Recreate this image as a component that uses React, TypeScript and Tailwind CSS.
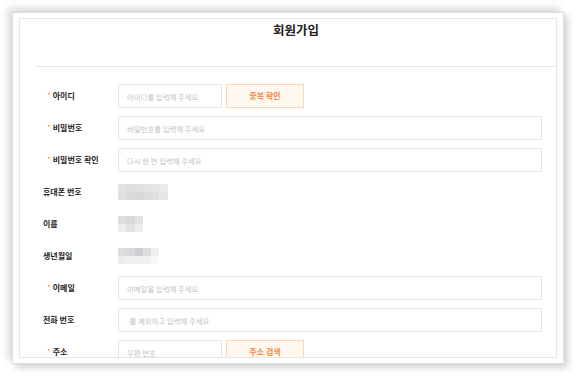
import React from 'react';

type Field =
  | { kind: 'input'; label: string; required?: boolean; placeholder: string; button?: string; short?: boolean }
  | { kind: 'blur'; label: string; cells: string[][] };

const fields: Field[] = [
  { kind: 'input', label: '아이디', required: true, placeholder: '아이디를 입력해 주세요', button: '중복 확인', short: true },
  { kind: 'input', label: '비밀번호', required: true, placeholder: '비밀번호를 입력해 주세요' },
  { kind: 'input', label: '비밀번호 확인', required: true, placeholder: '다시 한 번 입력해 주세요' },
  {
    kind: 'blur',
    label: '휴대폰 번호',
    cells: [
      ['bg-[#e3e3e3]', 'bg-[#dfdfdf]', 'bg-[#e0e0e0]', 'bg-[#e3e3e3]', 'bg-[#e6e6e8]', 'bg-[#eaeaea]'],
      ['bg-[#dfdfdf]', 'bg-[#dbdbdb]', 'bg-[#d8d8d8]', 'bg-[#dcdcdc]', 'bg-[#dfdfdf]', 'bg-[#e7e7e7]'],
    ],
  },
  {
    kind: 'blur',
    label: '이름',
    cells: [
      ['bg-[#dddddd]', 'bg-[#d9d9d9]', 'bg-[#e1e1e1]'],
      ['bg-[#ececec]', 'bg-[#e2e2e2]', 'bg-[#ededed]'],
    ],
  },
  {
    kind: 'blur',
    label: '생년월일',
    cells: [
      ['bg-[#dddddd]', 'bg-[#dad9dc]', 'bg-[#d0ced4]', 'bg-[#dddcdf]', 'bg-[#f0f0f0]'],
      ['bg-[#ededed]', 'bg-[#f0f0f0]', 'bg-[#eeeeee]', 'bg-[#f2f2f2]', 'bg-[#f8f8f8]'],
    ],
  },
  { kind: 'input', label: '이메일', required: true, placeholder: '이메일을 입력해 주세요' },
  { kind: 'input', label: '전화 번호', placeholder: '-를 제외하고 입력해 주세요' },
  { kind: 'input', label: '주소', required: true, placeholder: '우편 번호', button: '주소 검색', short: true },
];

function Label({ text, required }: { text: string; required?: boolean }) {
  return (
    <div className="flex w-[82px] shrink-0 items-center pl-[7px] text-[8px] font-bold text-[#222]">
      {required && <span className="ml-[4px] mr-[2px] font-normal text-[#f6a04c]">*</span>}
      <span>{text}</span>
    </div>
  );
}

function FieldRow({ field }: { field: Field }) {
  if (field.kind === 'blur') {
    return (
      <div className="flex h-[32px] items-center">
        <Label text={field.label} />
        <div className="flex flex-col">
          {field.cells.map((row, r) => (
            <div key={r} className="flex">
              {row.map((c, i) => (
                <div key={i} className={`h-[8px] w-[8.3px] ${c}`} />
              ))}
            </div>
          ))}
        </div>
      </div>
    );
  }

  return (
    <div className="flex h-[32px] items-center">
      <Label text={field.label} required={field.required} />
      <input
        type="text"
        placeholder={field.placeholder}
        className={`h-[24px] border border-[#e4e4e4] bg-white px-[8px] text-[7.4px] outline-none placeholder:text-[#c3c3c3] ${
          field.short ? 'w-[104px]' : 'flex-1'
        }`}
      />
      {field.button && (
        <button
          type="button"
          className="ml-[4px] h-[24px] w-[78px] border border-[#fcd6ae] bg-[#fff8f1] text-[8px] font-bold text-[#f5883a]"
        >
          {field.button}
        </button>
      )}
    </div>
  );
}

export default function App() {
  return (
    <div className="h-[378px] w-[576px] overflow-hidden bg-white pl-[12px] pt-[12px] font-['Noto_Sans_CJK_KR','Noto_Sans',sans-serif]">
      <div className="h-[352px] w-[552px] border border-[#dedede] bg-white px-[6px] py-[5px] shadow-[-4px_-4px_7px_rgba(0,0,0,0.14),4px_4px_7px_rgba(0,0,0,0.17)]">
        <div className="h-full overflow-hidden border border-[#e6e6e6] pl-[16px]">
          <h1 className="mt-[3px] h-[16px] text-center text-[12.5px] leading-[16px] font-bold text-[#222]">회원가입</h1>
          <div className="mt-[28px] h-px bg-[#e8e8e8]" />
          <div className="mt-[13px] pr-[14px]">
            {fields.map((f) => (
              <FieldRow key={f.label} field={f} />
            ))}
          </div>
        </div>
      </div>
    </div>
  );
}
